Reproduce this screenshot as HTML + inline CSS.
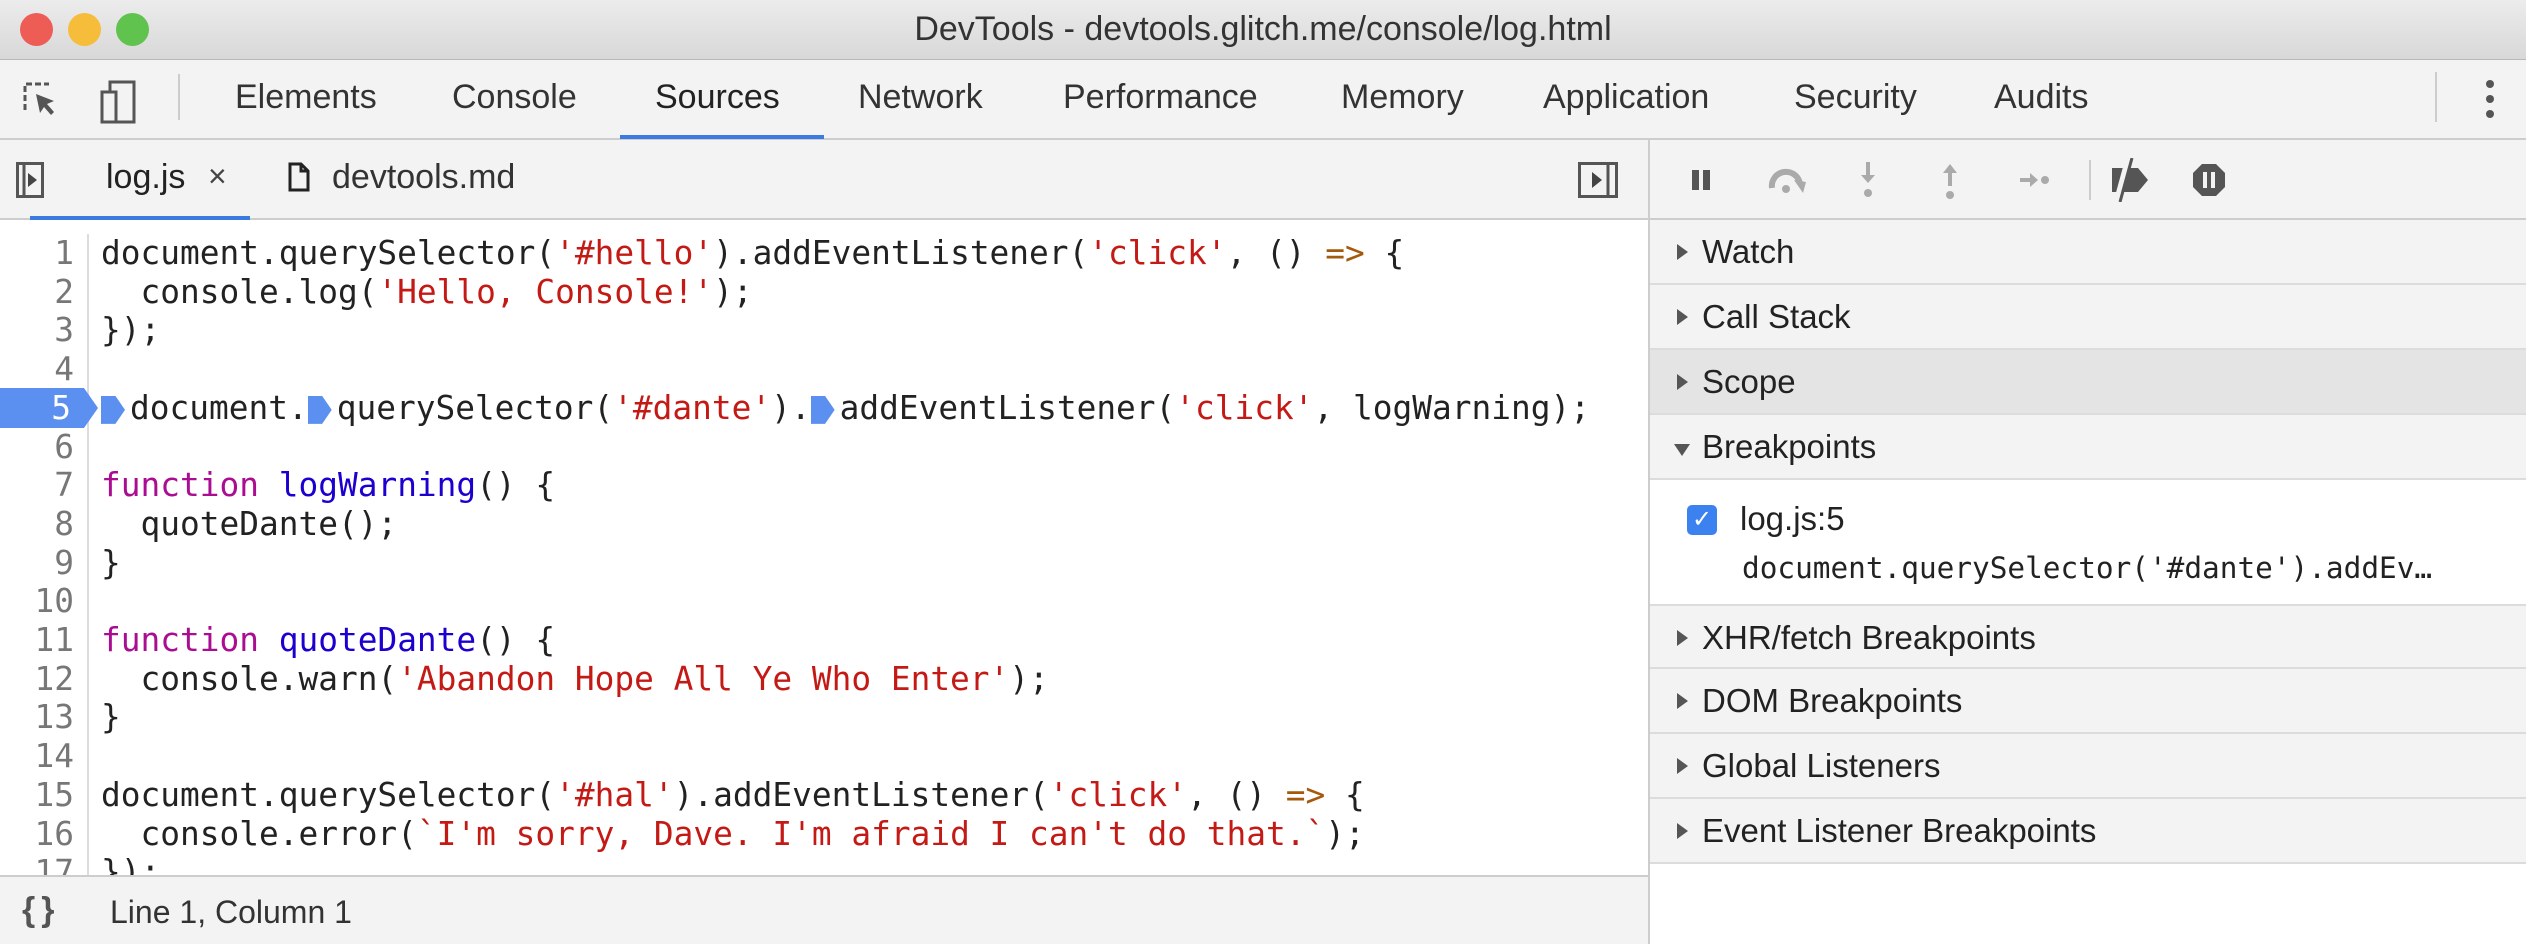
<!DOCTYPE html>
<html><head><meta charset="utf-8"><style>
*{margin:0;padding:0;box-sizing:border-box}
body{width:2526px;height:944px;overflow:hidden;background:#fff;font-family:"Liberation Sans",Helvetica,sans-serif;color:#333;position:relative}
.a{position:absolute;white-space:nowrap}
#title{left:0;top:0;width:2526px;height:60px;background:linear-gradient(#ececec,#d8d8d8);border-bottom:1px solid #b8b8b8}
.dot{position:absolute;top:13px;width:33px;height:33px;border-radius:50%}
#tabs{left:0;top:60px;width:2526px;height:80px;background:#f3f3f3;border-bottom:2px solid #cdcdcd}
.tab{position:absolute;top:78px;font-size:34px;color:#333}
#files{left:0;top:140px;width:1648px;height:80px;background:#f3f3f3;border-bottom:2px solid #cdcdcd}
#right{left:1648px;top:140px;width:878px;height:804px;background:#fff;border-left:2px solid #cdcdcd}
.sec{position:absolute;left:0;width:878px;height:65px;background:#f3f3f3;border-bottom:2px solid #dcdcdc;font-size:33px;color:#222}
.sec span{position:absolute;left:52px;top:13px}
.sec i{position:absolute;left:27px;top:24px;width:0;height:0;border-top:8px solid transparent;border-bottom:8px solid transparent;border-left:11px solid #555}
.code{font-family:"DejaVu Sans Mono","Liberation Mono",monospace;font-size:32.8px;line-height:38.7px;color:#222}
#gut{left:0;top:234px;width:89px;height:641px;border-right:2px solid #ddd;text-align:right;padding-right:13px;color:#777;overflow:hidden}
#src{left:101px;top:234px;width:1540px;height:641px;overflow:hidden}
.s{color:#c41a16}.k{color:#aa0d91}.d{color:#1c00cf}.o{color:#a4590c}
#status{left:0;top:875px;width:1648px;height:69px;background:#f3f3f3;border-top:2px solid #cdcdcd}
.mk{display:inline-block;width:24px;height:28px;background:#5b8ff0;vertical-align:-5px;clip-path:polygon(0 0,60% 0,100% 50%,60% 100%,0 100%);margin-right:5px}
</style></head><body>
<div id="title" class="a">
<div class="dot" style="left:20px;background:#ee5d55"></div>
<div class="dot" style="left:68px;background:#f6bd3a"></div>
<div class="dot" style="left:116px;background:#5fc34d"></div>
<div class="a" style="left:0;width:2526px;text-align:center;top:10px;font-size:34px;color:#333">DevTools - devtools.glitch.me/console/log.html</div>
</div>
<div id="tabs" class="a">
<svg class="a" style="left:22px;top:20px" width="150" height="44" viewBox="0 0 150 44"><path d="M3 30V4h24" fill="none" stroke="#555" stroke-width="3" stroke-dasharray="6 3"/><path d="M14 14l18 7-7 3 7 8-3 3-7-8-4 6z" fill="#555"/><rect x="80" y="12" width="14" height="30" fill="none" stroke="#555" stroke-width="3"/><path d="M88 12V2h24v40H94" fill="none" stroke="#555" stroke-width="3"/></svg>
<div class="a" style="left:178px;top:14px;width:2px;height:46px;background:#ccc"></div>
<div class="a" style="left:2435px;top:12px;width:2px;height:50px;background:#ccc"></div>
<div class="a" style="left:2486px;top:20px;width:8px;height:8px;border-radius:50%;background:#555;box-shadow:0 15px 0 #555,0 30px 0 #555"></div>
<div class="a" style="left:620px;top:75px;width:204px;height:4px;background:#3b7ae0"></div>
</div>
<div class="tab a" style="left:235px">Elements</div>
<div class="tab a" style="left:452px">Console</div>
<div class="tab a" style="left:655px;color:#222">Sources</div>
<div class="tab a" style="left:858px">Network</div>
<div class="tab a" style="left:1063px">Performance</div>
<div class="tab a" style="left:1341px">Memory</div>
<div class="tab a" style="left:1543px">Application</div>
<div class="tab a" style="left:1794px">Security</div>
<div class="tab a" style="left:1994px">Audits</div>
<div id="files" class="a">
<svg class="a" style="left:16px;top:22px" width="28" height="36"><rect x="1.5" y="1.5" width="25" height="33" fill="none" stroke="#555" stroke-width="3"/><line x1="8" y1="2" x2="8" y2="34" stroke="#555" stroke-width="3"/><path d="M12 11l9 7-9 7z" fill="#444"/></svg>
<div class="a" style="left:106px;top:18px;font-size:34px;color:#222">log.js</div>
<div class="a" style="left:208px;top:18px;font-size:32px;color:#444">×</div>
<div class="a" style="left:30px;top:76px;width:220px;height:4px;background:#3b7ae0"></div>
<svg class="a" style="left:288px;top:22px" width="22" height="30"><path d="M2 2h11l7 7v19H2z M13 2v7h7" fill="none" stroke="#222" stroke-width="3"/></svg>
<div class="a" style="left:332px;top:18px;font-size:34px;color:#333">devtools.md</div>
<svg class="a" style="left:1578px;top:22px" width="40" height="36"><rect x="1.5" y="1.5" width="37" height="33" fill="none" stroke="#555" stroke-width="3"/><line x1="30" y1="2" x2="30" y2="34" stroke="#555" stroke-width="3"/><path d="M14 10l10 8-10 8z" fill="#444"/></svg>
</div>
<div id="gut" class="a code">1<br>2<br>3<br>4<br><span style="color:#fff">5</span><br>6<br>7<br>8<br>9<br>10<br>11<br>12<br>13<br>14<br>15<br>16<br>17</div>
<svg class="a" style="left:0;top:388px" width="100" height="40"><path d="M0 0H84L98 20L84 40H0z" fill="#5b8ff0"/></svg>
<div class="a code" style="left:0;top:388px;width:84px;text-align:right;padding-right:13px;color:#fff;line-height:40px">5</div>
<div id="src" class="a code">document.querySelector(<span class="s">'#hello'</span>).addEventListener(<span class="s">'click'</span>, () <span class="o">=&gt;</span> {<br>&nbsp;&nbsp;console.log(<span class="s">'Hello, Console!'</span>);<br>});<br><br><span class="mk"></span>document.<span class="mk"></span>querySelector(<span class="s">'#dante'</span>).<span class="mk"></span>addEventListener(<span class="s">'click'</span>, logWarning);<br><br><span class="k">function</span> <span class="d">logWarning</span>() {<br>&nbsp;&nbsp;quoteDante();<br>}<br><br><span class="k">function</span> <span class="d">quoteDante</span>() {<br>&nbsp;&nbsp;console.warn(<span class="s">'Abandon Hope All Ye Who Enter'</span>);<br>}<br><br>document.querySelector(<span class="s">'#hal'</span>).addEventListener(<span class="s">'click'</span>, () <span class="o">=&gt;</span> {<br>&nbsp;&nbsp;console.error(<span class="s">`I'm sorry, Dave. I'm afraid I can't do that.`</span>);<br>});</div>
<div id="status" class="a">
<div class="a" style="left:22px;top:14px;font-size:34px;color:#555;font-weight:bold;letter-spacing:6px">{}</div>
<div class="a" style="left:110px;top:17px;font-size:32px;color:#333">Line 1, Column 1</div>
</div>
<div id="right" class="a">
<div class="a" style="left:0;top:0;width:878px;height:80px;background:#f3f3f3;border-bottom:2px solid #cdcdcd">
<svg class="a" style="left:30px;top:18px" width="640" height="44" viewBox="0 0 640 44">
<rect x="12" y="12" width="7" height="20" fill="#555"/><rect x="23" y="12" width="7" height="20" fill="#555"/>
<path d="M92 30a14 14 0 0 1 28 -4" fill="none" stroke="#aaa" stroke-width="6"/><path d="M114 22l12 2-3 11z" fill="#aaa"/><circle cx="106" cy="31" r="4" fill="#aaa"/>
<path d="M188 4v16" stroke="#aaa" stroke-width="4"/><path d="M181 17l7 8 7-8z" fill="#aaa"/><circle cx="188" cy="35" r="4" fill="#aaa"/>
<path d="M270 12v16" stroke="#aaa" stroke-width="4"/><path d="M263 15l7-9 7 9z" fill="#aaa"/><circle cx="270" cy="37" r="4" fill="#aaa"/>
<path d="M340 22h14" stroke="#aaa" stroke-width="4"/><path d="M350 15l8 7-8 7z" fill="#aaa"/><circle cx="365" cy="22" r="4" fill="#aaa"/>
<line x1="410" y1="2" x2="410" y2="42" stroke="#ccc" stroke-width="2"/>
<path d="M432 10h26l10 12-10 12h-26z" fill="#555"/><line x1="448" y1="0" x2="436" y2="44" stroke="#f3f3f3" stroke-width="5"/><line x1="452" y1="0" x2="440" y2="44" stroke="#555" stroke-width="3"/>
<path d="M522 6h14l9 9v14l-9 9h-14l-9-9v-14z" fill="#555"/><rect x="523" y="14" width="4" height="16" fill="#f3f3f3"/><rect x="531" y="14" width="4" height="16" fill="#f3f3f3"/>
</svg></div>
<div class="sec" style="top:80px"><i></i><span>Watch</span></div>
<div class="sec" style="top:145px"><i></i><span>Call Stack</span></div>
<div class="sec" style="top:210px;background:#e4e4e4"><i></i><span>Scope</span></div>
<div class="sec" style="top:275px"><i style="left:24px;top:29px;border-left:8px solid transparent;border-right:8px solid transparent;border-top:12px solid #555;border-bottom:0"></i><span>Breakpoints</span></div>
<div class="a" style="left:37px;top:365px;width:30px;height:30px;border-radius:5px;background:#3b82f0;color:#fff;font-size:24px;text-align:center;line-height:30px">✓</div>
<div class="a" style="left:90px;top:360px;font-size:33px;color:#222">log.js:5</div>
<div class="a code" style="left:92px;top:410px;font-size:29.4px;line-height:36px">document.querySelector('#dante').addEv…</div>
<div class="sec" style="top:464px;border-top:2px solid #dcdcdc"><i></i><span>XHR/fetch Breakpoints</span></div>
<div class="sec" style="top:529px"><i></i><span>DOM Breakpoints</span></div>
<div class="sec" style="top:594px"><i></i><span>Global Listeners</span></div>
<div class="sec" style="top:659px"><i></i><span>Event Listener Breakpoints</span></div>
</div>
</body></html>
